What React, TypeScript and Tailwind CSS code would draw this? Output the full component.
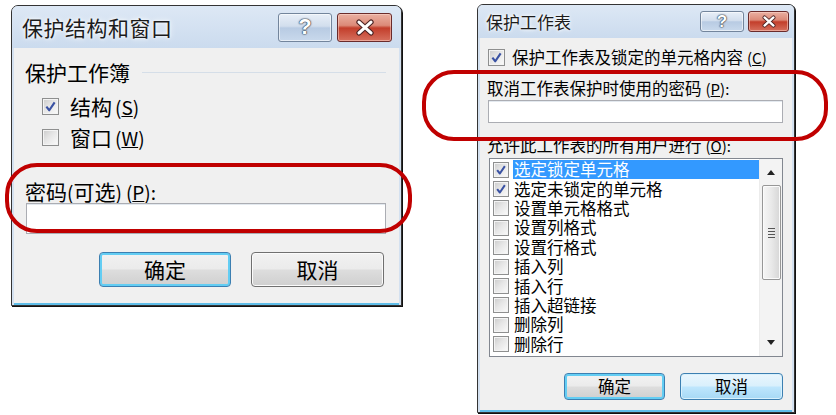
import React from "react";

const font = "font-['Noto_Sans_CJK_SC','Microsoft_YaHei',sans-serif]";

function CheckBox({ checked, className }: { checked?: boolean; className: string }) {
  return (
    <span
      className={`${className} shrink-0 flex items-center justify-center border border-[#8e8f8f] bg-[linear-gradient(135deg,#cbcbcb_0%,#e6e6e6_45%,#fbfbfb_100%)] shadow-[inset_0_0_0_1px_#f4f4f4]`}
    >
      {checked && (
        <svg viewBox="0 0 16 16" className="w-full h-full">
          <path d="M3.6 8.2 L6.7 12 L12.4 3.6" fill="none" stroke="#3a52a3" strokeWidth="2.3" strokeLinejoin="round" />
        </svg>
      )}
    </span>
  );
}

function TitleButtons({ big }: { big?: boolean }) {
  return (
    <div className={`flex ${big ? "gap-[5px]" : "gap-[4px]"}`}>
      <div
        className={`${big ? "w-[54px] h-[29px] text-[22px]" : "w-[44px] h-[21px] text-[17px]"} rounded-[3px] border border-[#73859c] bg-[linear-gradient(#e8eff8_0%,#d2deed_45%,#b8cbe3_52%,#c9d9ec_100%)] shadow-[inset_0_0_0_1px_rgba(255,255,255,0.55)] flex items-center justify-center`}
      >
        <span className="font-['Liberation_Sans',sans-serif] font-bold leading-none text-white [text-shadow:0_0_1px_#2d3a4a,0_0_1px_#2d3a4a,0_0_2px_#2d3a4a]">
          ?
        </span>
      </div>
      <div
        className={`${big ? "w-[55px] h-[29px]" : "w-[41px] h-[21px]"} rounded-[3px] border border-[#6a2b2b] bg-[linear-gradient(#eab0a2_0%,#dc8a78_42%,#c33e2b_52%,#d6705e_100%)] shadow-[inset_0_0_0_1px_rgba(255,220,210,0.5)] flex items-center justify-center`}
      >
        <svg viewBox="0 0 20 14" className={big ? "w-[24px] h-[17px]" : "w-[18px] h-[13px]"}>
          <path d="M5 2.5 L15 11.5 M15 2.5 L5 11.5" stroke="#4a2222" strokeWidth="4.4" strokeLinecap="round" />
          <path d="M5 2.5 L15 11.5 M15 2.5 L5 11.5" stroke="#ffffff" strokeWidth="2.6" strokeLinecap="round" />
        </svg>
      </div>
    </div>
  );
}

function Btn({ children, kind, className }: { children: React.ReactNode; kind: "default" | "normal" | "hover"; className: string }) {
  const look =
    kind === "default"
      ? "border-[#3c7fb1] shadow-[inset_0_0_0_2px_#63cdf3] bg-[linear-gradient(#f2f2f2_0%,#ebebeb_48%,#dddddd_52%,#cfcfcf_100%)]"
      : kind === "hover"
      ? "border-[#3c7fb1] shadow-[inset_0_0_0_1px_#d8f1fd] bg-[linear-gradient(#eaf6fd_0%,#d9f0fc_48%,#bee6fd_52%,#a7d9f5_100%)]"
      : "border-[#707070] shadow-[inset_0_0_0_1px_#fbfbfb] bg-[linear-gradient(#f2f2f2_0%,#ebebeb_48%,#dddddd_52%,#cfcfcf_100%)]";
  return (
    <div className={`${className} ${look} border rounded-[4px] flex items-center justify-center text-black`}>
      {children}
    </div>
  );
}

function ProtectWorkbook() {
  return (
    <div className={`w-[391px] h-[301px] mt-[1px] rounded-t-[7px] border border-[#343434] bg-[#d4e1f0] shadow-[1px_1px_0_#111] flex flex-col ${font}`}>
      <div className="h-[42px] shrink-0 rounded-t-[6px] bg-[linear-gradient(#dde8f5,#cbdbee)] flex items-center justify-between pl-[10px] pr-[9px]">
        <span className="text-[21px] leading-none text-[#1b1b1b] tracking-[0.5px] [text-shadow:0_0_6px_#fff,0_0_3px_#fff]">保护结构和窗口</span>
        <TitleButtons big />
      </div>
      <div className="flex-1 mx-[2px] mb-0 bg-[#f0f0f0] border-b-2 border-[#5fbde8] flex flex-col text-[21px] text-black">
        <div className="mt-[10px] pl-[11px] pr-[13px] h-[28px] flex items-center">
          <span className="leading-[28px]">保护工作簿</span>
          <div className="flex-1 h-px bg-[#d5dee8] ml-[12px]" />
        </div>
        <div className="mt-[6px] flex flex-col gap-[3px] pl-[28px]">
          <div className="h-[28px] flex items-center gap-[11px]">
            <CheckBox checked className="w-[17px] h-[17px]" />
            <span className="leading-[28px]">
              结构<span className="ml-[3px] text-[19px]">(<u>S</u>)</span>
            </span>
          </div>
          <div className="h-[28px] flex items-center gap-[11px]">
            <CheckBox className="w-[17px] h-[17px]" />
            <span className="leading-[28px]">
              窗口<span className="ml-[3px] text-[19px]">(<u>W</u>)</span>
            </span>
          </div>
        </div>
        <div className="mt-[29px] pl-[11px] h-[22px] leading-[22px]">
          密码<span className="text-[19px]">(</span>可选<span className="text-[19px]">)</span>
          <span className="ml-[4px] text-[19px]">(<u>P</u>):</span>
        </div>
        <div className="mt-[1px] ml-[12px] w-[360px] h-[31px] bg-white border border-[#abadb3] shadow-[inset_0_1px_0_#e3e9ef]" />
        <div className="mt-[18px] flex justify-end gap-[20px] pr-[15px]">
          <Btn kind="default" className="w-[132px] h-[35px]">确定</Btn>
          <Btn kind="normal" className="w-[133px] h-[35px]">取消</Btn>
        </div>
      </div>
    </div>
  );
}

const items = ["选定锁定单元格", "选定未锁定的单元格", "设置单元格格式", "设置列格式", "设置行格式", "插入列", "插入行", "插入超链接", "删除列", "删除行"];

function ProtectSheet() {
  return (
    <div className={`w-[318px] h-[409px] rounded-t-[6px] border border-[#343434] bg-[#d4e1f0] shadow-[1px_1px_0_#111] flex flex-col ${font}`}>
      <div className="h-[33px] shrink-0 rounded-t-[5px] bg-[linear-gradient(#dde8f5,#cbdbee)] flex items-center justify-between pl-[8px] pr-[5px]">
        <span className="text-[17px] leading-none text-[#1b1b1b] [text-shadow:0_0_5px_#fff,0_0_3px_#fff]">保护工作表</span>
        <TitleButtons />
      </div>
      <div className="flex-1 mx-[2px] bg-[#f0f0f0] border-b-2 border-[#5fbde8] flex flex-col text-[16.5px] text-black">
        <div className="mt-[8px] pl-[8px] h-[22px] flex items-center gap-[7px]">
          <CheckBox checked className="w-[17px] h-[17px]" />
          <span className="leading-[22px] whitespace-nowrap">
            保护工作表及锁定的单元格内容<span className="ml-[4px] text-[15px]">(<u>C</u>)</span>
          </span>
        </div>
        <div className="mt-[9px] pl-[7px] h-[22px] leading-[22px] whitespace-nowrap">
          取消工作表保护时使用的密码<span className="ml-[4px] text-[15px]">(<u>P</u>):</span>
        </div>
        <div className="mt-[1px] ml-[8px] w-[295px] h-[23px] bg-white border border-[#abadb3] shadow-[inset_0_1px_0_#e3e9ef]" />
        <div className="mt-[11px] pl-[7px] h-[22px] leading-[22px] whitespace-nowrap">
          允许此工作表的所有用户进行<span className="ml-[4px] text-[15px]">(<u>O</u>):</span>
        </div>
        <div className="mt-[2px] ml-[9px] w-[294px] h-[199px] border border-[#828790] bg-white flex">
          <div className="flex-1 pt-[1px] flex flex-col">
            {items.map((it, i) => (
              <div key={it} className="h-[19.4px] flex items-center pl-[3px]">
                <CheckBox checked={i < 2} className="w-[16px] h-[16px]" />
                <span
                  className={`ml-[4px] flex-1 h-[19px] leading-[19px] pl-[1px] whitespace-nowrap ${i === 0 ? "bg-[#3399ff] text-white" : ""}`}
                >
                  {it}
                </span>
              </div>
            ))}
          </div>
          <div className="w-[23px] bg-[#f3f3f3] border-l border-[#ececec] flex flex-col items-center">
            <div className="h-[26px] w-full flex items-center justify-center">
              <svg viewBox="0 0 8 5" className="w-[8px] h-[5px]">
                <path d="M0 5 L4 0 L8 5 Z" fill="#222" />
              </svg>
            </div>
            <div className="w-[19px] h-[95px] rounded-[2px] border border-[#979797] bg-[linear-gradient(90deg,#f6f6f6_0%,#e9e9e9_50%,#d6d6d6_100%)] shadow-[inset_0_0_0_1px_#fbfbfb] flex flex-col items-center justify-center gap-[2px]">
              <div className="w-[7px] h-px bg-[#555]" />
              <div className="w-[7px] h-px bg-[#555]" />
              <div className="w-[7px] h-px bg-[#555]" />
              <div className="w-[7px] h-px bg-[#555]" />
            </div>
            <div className="flex-1" />
            <div className="h-[27px] w-full flex items-center justify-center">
              <svg viewBox="0 0 8 5" className="w-[8px] h-[5px]">
                <path d="M0 0 L8 0 L4 5 Z" fill="#222" />
              </svg>
            </div>
          </div>
        </div>
        <div className="mt-[16px] flex justify-end gap-[15px] pr-[9px]">
          <Btn kind="default" className="w-[101px] h-[27px]">确定</Btn>
          <Btn kind="hover" className="w-[103px] h-[27px]">取消</Btn>
        </div>
      </div>
    </div>
  );
}

export default function App() {
  return (
    <div className="relative w-[836px] h-[415px] bg-white flex items-start pl-[11px] pt-[4px] gap-[75px] overflow-hidden">
      <ProtectWorkbook />
      <ProtectSheet />
      {/* red highlight rings */}
      <div className="absolute left-[5px] top-[163px] w-[407px] h-[70px] rounded-[32px] border-[4px] border-[#c00000]" />
      <div className="absolute left-[422px] top-[70px] w-[406px] h-[71px] rounded-[32px] border-[4px] border-[#c00000]" />
    </div>
  );
}
